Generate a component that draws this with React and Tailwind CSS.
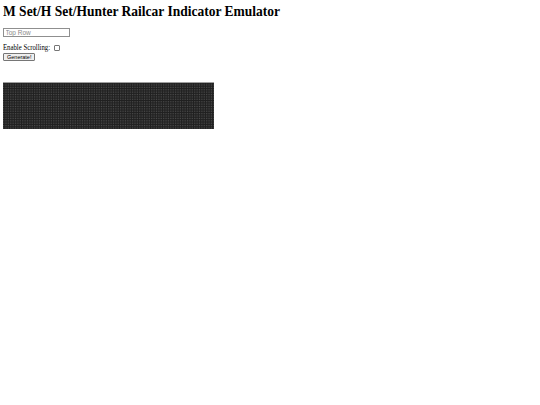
import React from 'react';

// LED matrix board preview, drawn as a dot pattern
function LedBoard() {
  return (
    <svg width="211" height="47" className="block" shapeRendering="crispEdges">
      <defs>
        <pattern id="led" width="1.72" height="1.72" patternUnits="userSpaceOnUse">
          <rect width="1.72" height="1.72" fill="#202020" />
          <rect x="0" y="0" width="1.2" height="1.2" fill="#4e4e4e" />
        </pattern>
      </defs>
      <rect width="211" height="47" fill="url(#led)" />
      <rect width="211" height="1" fill="#a0a0a0" />
    </svg>
  );
}

export default function App() {
  return (
    <div className="bg-white min-h-[405px] pl-[3px] font-['Liberation_Serif',serif] text-black">
      <h1 className="pt-[2px] text-[13.5px] leading-[15px] font-bold origin-top-left scale-y-[1.15]">
        M Set/H Set/Hunter Railcar Indicator Emulator
      </h1>

      <div className="mt-[11px]">
        <input
          type="text"
          placeholder="Top Row"
          className="block w-[67px] h-[9px] border border-[#8f8f8f] px-[1.5px] text-[6.5px] leading-[7px] font-['Liberation_Sans',sans-serif] placeholder:text-[#8a8a8a] outline-none"
        />
      </div>

      <div className="mt-[7px] flex items-center text-[6.75px] leading-[8px]">
        <span className="scale-y-[1.15]">Enable Scrolling:</span>
        <span className="ml-[4px] inline-block w-[6px] h-[6px] border border-[#767676] rounded-[1px] bg-white" />
      </div>

      <button className="mt-[1px] block h-[8px] px-[3px] border border-[#767676] rounded-[1px] bg-[#efefef] text-[5.5px] leading-[6px] font-['Liberation_Sans',sans-serif]">
        Generate!
      </button>

      <div className="mt-[21px]">
        <LedBoard />
      </div>
    </div>
  );
}
